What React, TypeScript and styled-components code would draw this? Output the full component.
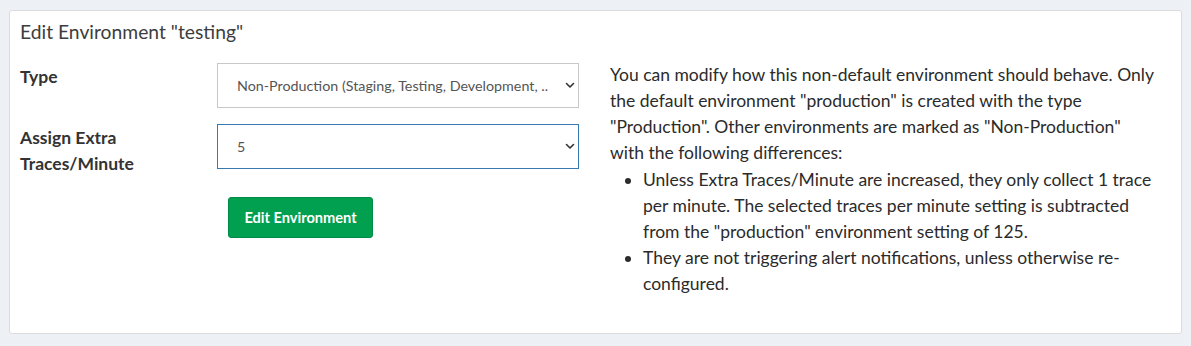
import React from "react";
import styled, { createGlobalStyle } from "styled-components";

const Global = createGlobalStyle`
  html, body { margin: 0; padding: 0; background: #edf1f5; }
  body { font-family: "Lato", "Open Sans", sans-serif; color: #333; }
  * { box-sizing: border-box; }
`;

const Page = styled.div`
  padding: 10px 9px;
`;

const Card = styled.section`
  background: #fff;
  border: 1px solid #dcdcdc;
  border-radius: 3px;
  padding: 8px 10px 35px 10px;
  height: 324px;
`;

const Title = styled.h2`
  margin: 0;
  font-size: 19.3px;
  font-weight: 400;
  line-height: 26px;
  color: #3d3d3d;
`;

const Body = styled.div`
  display: grid;
  grid-template-columns: 575px 1fr;
  margin-top: 18px;
`;

const FormGrid = styled.div`
  display: grid;
  grid-template-columns: 197px 362px;
  row-gap: 16px;
  align-content: start;
`;

const Label = styled.label`
  font-size: 17.5px;
  font-weight: 700;
  line-height: 26px;
  padding-top: 1px;
  color: #333;
  padding-right: 40px;
`;

const SelectWrap = styled.div`
  position: relative;
  height: 45px;
`;

const Select = styled.select<{ $focused?: boolean }>`
  appearance: none;
  -webkit-appearance: none;
  width: 100%;
  height: 45px;
  padding: 0 28px 0 19px;
  font-family: "Lato", "Open Sans", sans-serif;
  font-size: 14.3px;
  color: #555;
  background: #fff;
  border: 1px solid ${(p) => (p.$focused ? "#3779b0" : "#c8c8c8")};
  border-radius: 0;
  outline: none;
`;

const Chevron = styled.svg`
  position: absolute;
  right: 4px;
  top: 19px;
  width: 10px;
  height: 7px;
  pointer-events: none;
`;

const ButtonCell = styled.div`
  grid-column: 2;
  padding-left: 11px;
  padding-top: 4px;
`;

const Button = styled.button`
  width: 145px;
  height: 41px;
  background: #00a050;
  border: 1px solid #008c45;
  border-radius: 3px;
  color: #fff;
  font-family: "Lato", "Open Sans", sans-serif;
  font-size: 14.6px;
  font-weight: 700;
  cursor: pointer;
`;

const Help = styled.div`
  padding: 0 15px;
  margin-top: -1px;
  font-size: 17.5px;
  line-height: 26px;
  color: #2b2b2b;
`;

const Para = styled.p`
  margin: 0 0 1px 0;
`;

const List = styled.ul`
  margin: 0;
  padding-left: 33px;
`;

const ChevronIcon = () => (
  <Chevron viewBox="0 0 10 7">
    <path d="M1.5 1.5 L5 5 L8.5 1.5" fill="none" stroke="#333" strokeWidth="1.6" strokeLinecap="round" strokeLinejoin="round" />
  </Chevron>
);

export default function App() {
  return (
    <>
      <Global />
      <Page>
        <Card>
          <Title>Edit Environment "testing"</Title>
          <Body>
            <FormGrid>
              <Label>Type</Label>
              <SelectWrap>
                <Select defaultValue="np">
                  <option value="np">Non-Production (Staging, Testing, Development, ..</option>
                  <option value="p">Production</option>
                </Select>
                <ChevronIcon />
              </SelectWrap>
              <Label>Assign Extra Traces/Minute</Label>
              <SelectWrap>
                <Select $focused defaultValue="5">
                  <option value="0">0</option>
                  <option value="5">5</option>
                  <option value="10">10</option>
                </Select>
                <ChevronIcon />
              </SelectWrap>
              <ButtonCell>
                <Button type="button">Edit Environment</Button>
              </ButtonCell>
            </FormGrid>
            <Help>
              <Para>
                You can modify how this non-default environment should behave. Only the default environment
                "production" is created with the type "Production". Other environments are marked as
                "Non-Production"
                <br />
                with the following differences:
              </Para>
              <List>
                <li>
                  Unless Extra Traces/Minute are increased, they only collect 1 trace per minute. The selected
                  traces per minute setting is subtracted
                  <br />
                  from the "production" environment setting of 125.
                </li>
                <li>They are not triggering alert notifications, unless otherwise re-configured.</li>
              </List>
            </Help>
          </Body>
        </Card>
      </Page>
    </>
  );
}
